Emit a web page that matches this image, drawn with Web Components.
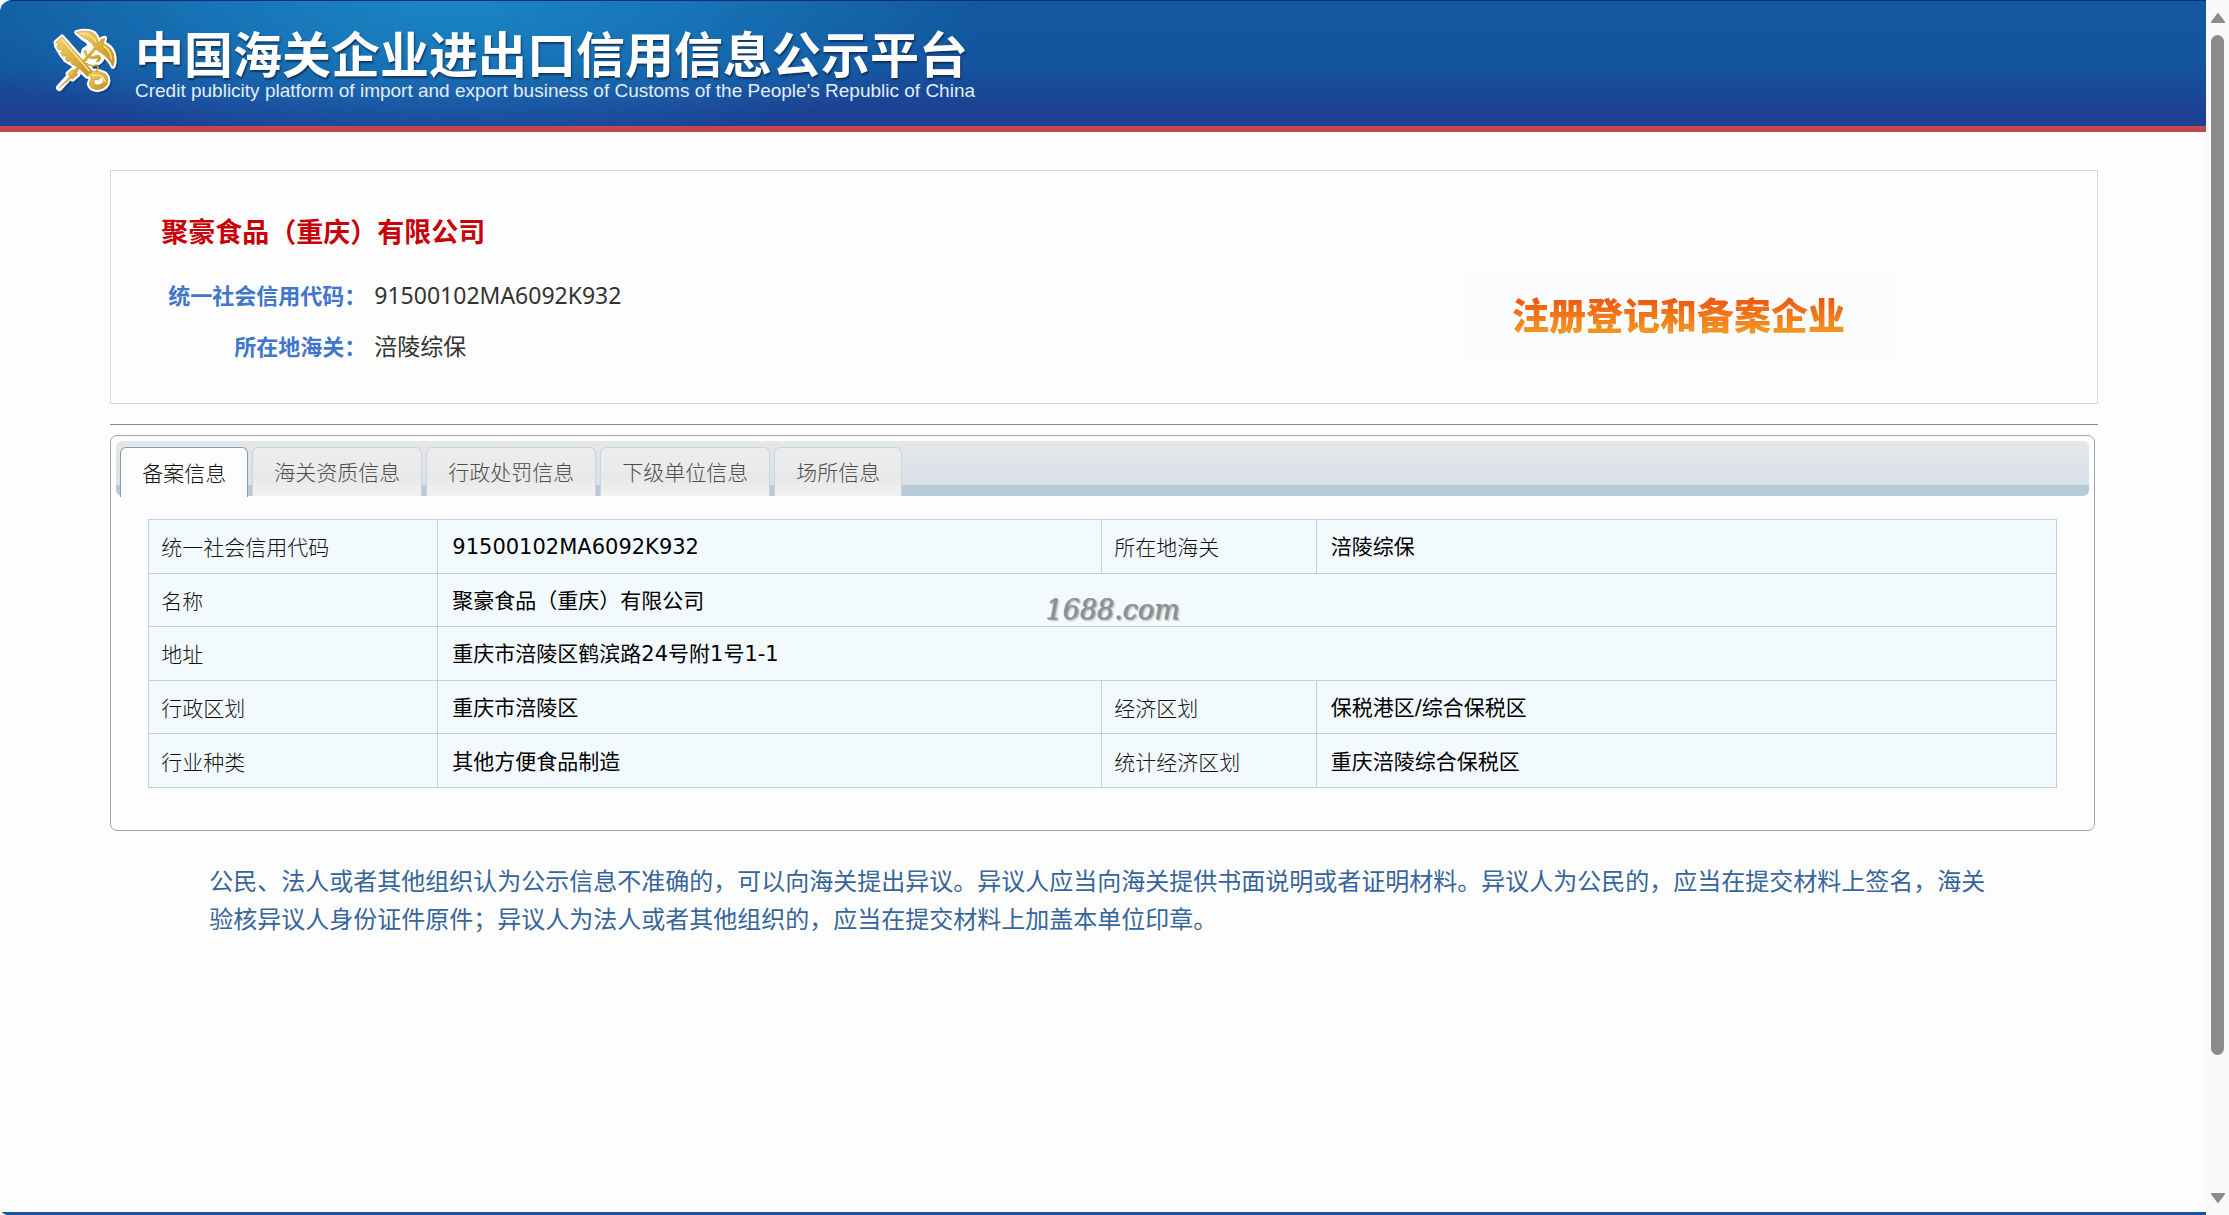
<!DOCTYPE html>
<html lang="zh-CN">
<head>
<meta charset="utf-8">
<title>中国海关企业进出口信用信息公示平台</title>
<style>
  html, body { margin: 0; height: 100%; }
  body { background: #fdfdfd; font-family: "Noto Sans", "Noto Sans CJK SC", sans-serif; color: #222; overflow: hidden; }
</style>
</head>
<body>
<credit-app></credit-app>

<template id="t-app">
  <style>
    :host { display: flex; min-height: 100vh; }
    .page { flex: 1; min-width: 0; display: flex; flex-direction: column; border-radius: 12px 0 0 8px; overflow: hidden; box-sizing: border-box; }
    .page::after { content: ""; height: 3px; background: #1553a0; }
    main { flex: 1; padding: 38px 4.9% 0 5%; }
    hr { margin: 20px 0 10px; border: 0; border-top: 1px solid #86869a; }
  </style>
  <div class="page">
    <site-header>
      中国海关企业进出口信用信息公示平台
      <span slot="en">Credit publicity platform of import and export business of Customs of the People's Republic of China</span>
    </site-header>
    <main>
      <company-card code="91500102MA6092K932" customs="涪陵综保" badge="注册登记和备案企业">聚豪食品（重庆）有限公司</company-card>
      <hr>
      <info-tabs><record-table></record-table></info-tabs>
      <notice-text>公民、法人或者其他组织认为公示信息不准确的，可以向海关提出异议。异议人应当向海关提供书面说明或者证明材料。异议人为公民的，应当在提交材料上签名，海关验核异议人身份证件原件；异议人为法人或者其他组织的，应当在提交材料上加盖本单位印章。</notice-text>
    </main>
  </div>
  <scroll-rail></scroll-rail>
</template>

<template id="t-header">
  <style>
    :host { display: flex; align-items: flex-start; gap: 15px; box-sizing: border-box; height: 132px; padding: 24px 50px 0; border-top: 1px solid #0a2c7c; border-bottom: 6px solid #c04a50;
      background: radial-gradient(ellipse 540px 150px at 450px 0, #1a86c5 0, rgba(26,134,197,.65) 40%, rgba(26,134,197,0) 100%), linear-gradient(#12589f 0, #13559f 50%, #1c4294 85%, #1e3f92 100%); color: #fff; }
    svg { flex: none; width: 70px; height: 72px; }
    h1 { margin: 0; font: bold 49px/54px "Noto Sans CJK SC", sans-serif; text-shadow: 1px 2px 2px rgba(20,30,60,.7); white-space: nowrap; }
    p { margin: 0; font: 19px/24px "Liberation Sans", sans-serif; color: #e4edfa; white-space: nowrap; }
  </style>
  <svg viewBox="30 30 210 216" aria-hidden="true">
    <defs>
      <linearGradient id="g" x1="0" y1="0" x2="1" y2="1"><stop offset="0" stop-color="#f3d873"/><stop offset=".5" stop-color="#dcae3c"/><stop offset="1" stop-color="#c08f22"/></linearGradient>
      <g id="shape" stroke-linejoin="round" stroke-linecap="round">
        <path d="M58 218 L92 182 L92 178 L176 84 L180 88 L98 186 Z"/>
        <path d="M84 176 L98 164 L114 178 L98 192 Z"/>
        <path d="M110 52 Q140 44 160 54 Q172 64 176 84 Q182 72 194 70 L190 86 Q212 94 220 116 Q226 138 219 154 Q206 128 184 114 Q172 108 164 98 Q158 84 142 74 Q126 66 110 52 Z"/>
        <path d="M48 82 L66 66 L160 172 L142 184 L112 154 L104 152 L94 146 L92 138 L84 140 L76 134 L80 122 L68 124 L62 114 L70 106 L56 104 L50 94 L56 88 Z"/>
        <path d="M132 112 Q130 104 138 106 L140 116 Q152 130 166 122 Q176 116 182 126 Q182 142 168 140 Q176 134 174 128 Q162 134 150 130 Q136 124 132 112 Z"/>
        <path fill-rule="evenodd" d="M144 178 L162 168 Q178 168 194 176 Q208 188 202 206 Q194 222 172 224 Q150 222 148 206 Q150 194 154 190 Z M164 194 Q158 204 168 210 Q182 212 190 202 Q194 190 184 188 Q178 188 176 194 Z"/>
      </g>
      <g id="outline" stroke-linejoin="round" stroke-linecap="round">
        <path d="M58 218 L176 88" stroke-width="20"/>
        <g stroke-width="15">
          <path d="M110 52 Q140 44 160 54 Q172 64 176 84 Q182 72 194 70 L190 86 Q212 94 220 116 Q226 138 219 154 Q206 128 190 120 Q184 142 168 144 L150 150 L124 134 L132 106 L152 92 Q146 78 130 70 Z"/>
          <path d="M48 82 L66 66 L160 172 L142 184 L104 152 L76 134 L62 114 L50 94 Z"/>
          <path d="M84 176 L98 164 L114 178 L98 192 Z"/>
          <path d="M144 178 L162 168 Q178 168 194 176 Q208 188 202 206 Q194 222 172 224 Q150 222 148 206 L154 190 Z"/>
        </g>
      </g>
    </defs>
    <use href="#outline" fill="#0e2c6c" stroke="#0e2c6c" opacity=".45" transform="translate(5 5)"/>
    <use href="#outline" fill="#fff" stroke="#fff"/>
    <use href="#shape" fill="url(#g)" stroke="#c9992e" stroke-width="2"/>
    <path d="M66 74 L148 168 M122 55 Q150 54 168 80 M192 94 Q210 104 215 132 M156 182 Q190 176 196 200" fill="none" stroke="#fbeaa0" stroke-width="4" stroke-linecap="round"/>
    <path d="M170 168 Q178 158 170 150 Q156 156 140 146" fill="none" stroke="#d3a437" stroke-width="5" stroke-linecap="round"/>
  </svg>
  <div>
    <h1><slot></slot></h1>
    <p><slot name="en"></slot></p>
  </div>
</template>

<template id="t-card">
  <style>
    :host { display: flex; justify-content: space-between; align-items: flex-start; box-sizing: border-box; height: 234px; padding: 40px 200px 0 50px; border: 1px solid #d6d6d6; }
    h2 { margin: 0 0 19px; font: bold 27px/40px "Noto Sans CJK SC", sans-serif; color: #c80008; }
    dl { margin: 0; display: grid; grid-template-columns: 205px auto; column-gap: 8px; font-size: 23px; line-height: 51px; color: #333; }
    dt { text-align: right; font-size: 22px; font-weight: bold; color: #4076cc; }
    dd { margin: 0; }
    .badge { margin-top: 56px; padding: 19px 52px; background: #fbfcfe; }
    .badge span { display: block; font: 900 37px/56px "Noto Sans CJK SC", sans-serif; color: transparent; background: linear-gradient(#ee5510 20%, #f39422 80%); -webkit-background-clip: text; background-clip: text; }
  </style>
  <div>
    <h2><slot></slot></h2>
    <dl><dt>统一社会信用代码：</dt><dd id="code"></dd><dt>所在地海关：</dt><dd id="customs"></dd></dl>
  </div>
  <div class="badge"><span id="badge"></span></div>
</template>

<template id="t-tabs">
  <style>
    :host { display: block; margin-right: 3px; box-sizing: border-box; min-height: 396px; padding: 5px; border: 1px solid #a2a4a8; border-radius: 7px; }
    nav { display: flex; gap: 4px; box-sizing: border-box; height: 55px; padding: 6px 4px 0; border-radius: 6px; background: linear-gradient(#e4e8ea 0, #d8e0e8 44px, #b5cbda 44px, #b5cbda 100%); }
    button { box-sizing: border-box; height: 49px; margin: 0; padding: 0 21px 2px; border: 1px solid #cdd5da; border-bottom: 0; border-radius: 6px 6px 0 0; background: linear-gradient(#ececec 0, #ebebeb 50%, #e6e6e6 50%, #f1f1f1 100%); color: #4c4c4c; font: 300 21px/46px "Noto Sans CJK SC", sans-serif; white-space: nowrap; }
    button[aria-selected="true"] { height: 50px; border-color: #8f9aa4; background: #fdfdfd; color: #111; }
    .body { padding: 23px 32px 0; }
  </style>
  <nav role="tablist">
    <button role="tab" aria-selected="true">备案信息</button>
    <button role="tab" aria-selected="false">海关资质信息</button>
    <button role="tab" aria-selected="false">行政处罚信息</button>
    <button role="tab" aria-selected="false">下级单位信息</button>
    <button role="tab" aria-selected="false">场所信息</button>
  </nav>
  <div class="body"><slot></slot></div>
</template>

<template id="t-table">
  <style>
    :host { display: block; position: relative; }
    table { width: 100%; height: 269px; table-layout: fixed; border-collapse: collapse; background: #f2fafd; font: 300 21px/30px "Noto Sans CJK SC", sans-serif; }
    th, td { border: 1px solid #bfd2dc; padding: 0 12px; text-align: left; font-weight: 300; color: #111; }
    td { padding: 2px 15px 0 14px; font-family: "DejaVu Sans", "Noto Sans CJK SC", sans-serif; font-weight: 400; color: #000; }
    .mark { position: absolute; left: 47%; top: 75px; font: italic 27px/32px "DejaVu Serif", serif; color: #8c9195; text-shadow: 1px 1px 1px #8c9195, 2px 2px 2px #c4cacd; }
  </style>
  <table>
    <colgroup><col style="width:15.15%"><col style="width:34.8%"><col style="width:11.25%"><col></colgroup>
    <tr><th>统一社会信用代码</th><td>91500102MA6092K932</td><th>所在地海关</th><td>涪陵综保</td></tr>
    <tr><th>名称</th><td colspan="3">聚豪食品（重庆）有限公司</td></tr>
    <tr><th>地址</th><td colspan="3">重庆市涪陵区鹤滨路24号附1号1-1</td></tr>
    <tr><th>行政区划</th><td>重庆市涪陵区</td><th>经济区划</th><td>保税港区/综合保税区</td></tr>
    <tr><th>行业种类</th><td>其他方便食品制造</td><th>统计经济区划</th><td>重庆涪陵综合保税区</td></tr>
  </table>
  <span class="mark">1688.com</span>
</template>

<template id="t-notice">
  <style>
    :host { display: block; padding: 30px 99px 0; font: 24px/38px "Noto Sans CJK SC", sans-serif; color: #36659a; }
  </style>
  <slot></slot>
</template>

<template id="t-rail">
  <style>
    :host { display: flex; flex-direction: column; align-items: center; box-sizing: border-box; width: 23px; padding: 12px 0 11px; background: #fafafa; }
    svg { width: 14px; height: 12px; fill: #8b8b8b; stroke: #8b8b8b; stroke-width: 2; stroke-linejoin: round; }
    .track { flex: 1; width: 13px; margin: 11px 0; }
    .thumb { height: 89%; border-radius: 7px; background: #8b8b8b; }
  </style>
  <svg viewBox="0 0 14 12"><path d="M7 2 L13 10 L1 10 Z"/></svg>
  <div class="track"><div class="thumb"></div></div>
  <svg viewBox="0 0 14 12"><path d="M7 10 L13 2 L1 2 Z"/></svg>
</template>

<script>
  class Base extends HTMLElement {
    constructor() {
      super();
      const t = document.getElementById(this.constructor.tpl);
      this.attachShadow({ mode: 'open' }).appendChild(t.content.cloneNode(true));
    }
  }
  class SiteHeader extends Base { static tpl = 't-header'; }
  class CompanyCard extends Base {
    static tpl = 't-card';
    connectedCallback() {
      for (const k of ['code', 'customs', 'badge']) this.shadowRoot.getElementById(k).textContent = this.getAttribute(k);
    }
  }
  class InfoTabs extends Base {
    static tpl = 't-tabs';
    connectedCallback() {
      const tabs = [...this.shadowRoot.querySelectorAll('button')];
      tabs.forEach(b => b.addEventListener('click', () => tabs.forEach(o => o.setAttribute('aria-selected', String(o === b)))));
    }
  }
  class RecordTable extends Base { static tpl = 't-table'; }
  class NoticeText extends Base { static tpl = 't-notice'; }
  class ScrollRail extends Base { static tpl = 't-rail'; }
  class CreditApp extends Base { static tpl = 't-app'; }
  customElements.define('site-header', SiteHeader);
  customElements.define('company-card', CompanyCard);
  customElements.define('info-tabs', InfoTabs);
  customElements.define('record-table', RecordTable);
  customElements.define('notice-text', NoticeText);
  customElements.define('scroll-rail', ScrollRail);
  customElements.define('credit-app', CreditApp);
</script>
</body>
</html>
